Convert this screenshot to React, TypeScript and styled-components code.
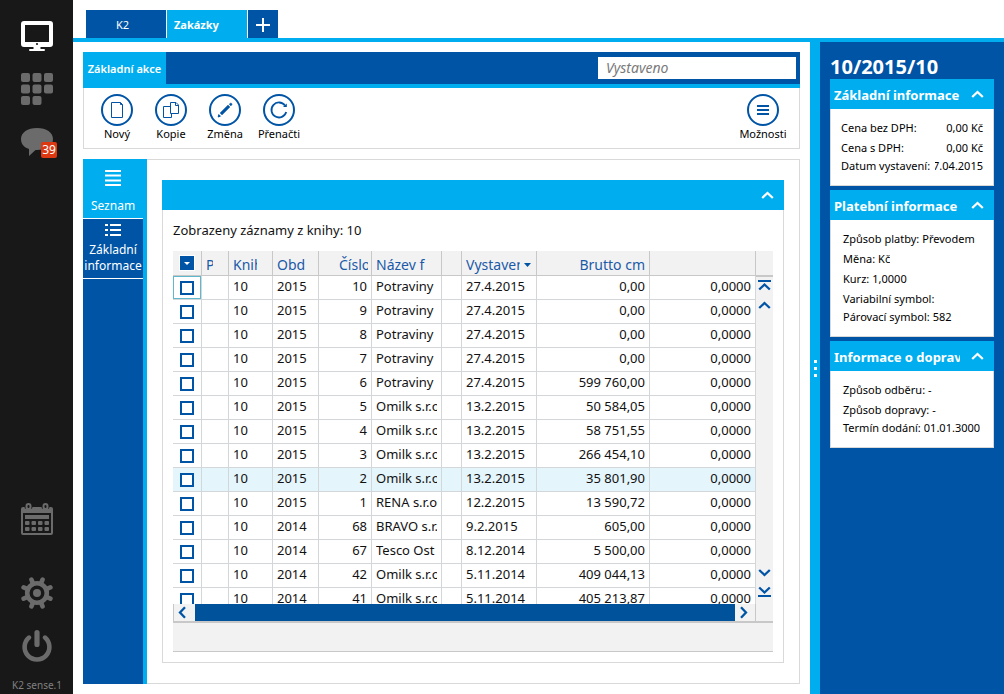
import React from 'react';
import styled, { createGlobalStyle, css } from 'styled-components';

const BLUE = '#0054a6';
const CYAN = '#00aeef';
const LINE = '#d9d9d9';
const GRAY = '#f2f2f2';
const RULE = '#c8c8c8';

const GlobalStyle = createGlobalStyle`
  *, *::before, *::after { box-sizing: border-box; }
  body {
    margin: 0;
    background: #fff;
    color: #111;
    font-family: "Noto Sans", "Open Sans", sans-serif;
    font-size: 13px;
  }
  button {
    margin: 0;
    padding: 0;
    border: 0;
    background: none;
    color: inherit;
    font: inherit;
    cursor: pointer;
  }
  svg { display: block; flex: none; }
  h1, h2, p, dl, dd, dt { margin: 0; }
`;

const Shell = styled.div`
  display: flex;
  height: 100vh;
  min-height: 560px;
  overflow: hidden;
`;

const Sidebar = styled.nav`
  display: flex;
  flex-direction: column;
  align-items: center;
  justify-content: space-between;
  width: 73px;
  flex: none;
  padding: 20px 0 0 1px;
  background: #181818;
  color: #6b6b6b;
`;

const SideGroup = styled.div<{ $gap: number }>`
  display: flex;
  flex-direction: column;
  align-items: center;
  gap: ${(p) => p.$gap}px;
`;

const SideButton = styled.button<{ $active?: boolean }>`
  position: relative;
  width: 32px;
  height: 32px;
  color: ${(p) => (p.$active ? '#fff' : 'inherit')};
`;

const Badge = styled.span`
  position: absolute;
  left: 20px;
  top: 16px;
  width: 16px;
  height: 16px;
  border-radius: 2px;
  background: #dc3912;
  color: #fff;
  font-size: 12px;
  line-height: 16px;
  text-align: center;
`;

const Version = styled.p`
  margin-top: 14px;
  font-size: 10px;
  line-height: 18px;
  color: #808080;
  white-space: nowrap;
`;

const Main = styled.div`
  display: flex;
  flex-direction: column;
  flex: 1;
  min-width: 0;
`;

const TabBar = styled.div`
  display: flex;
  gap: 1px;
  padding: 10px 13px 0;
  border-bottom: 4px solid ${CYAN};
`;

const Tab = styled.button<{ $active?: boolean }>`
  width: 80px;
  height: 28px;
  padding: 0 14px 0 7px;
  background: ${(p) => (p.$active ? CYAN : BLUE)};
  color: #fff;
  font-size: 11px;
  font-weight: ${(p) => (p.$active ? 700 : 400)};
  text-align: ${(p) => (p.$active ? 'left' : 'center')};
`;

const AddTab = styled.button`
  display: grid;
  place-items: center;
  width: 30px;
  height: 28px;
  padding-top: 2px;
  background: ${BLUE};
`;

const Body = styled.div`
  display: flex;
  flex: 1;
  min-height: 0;
`;

const Content = styled.main`
  display: flex;
  flex-direction: column;
  gap: 10px;
  flex: 1;
  min-width: 0;
  padding: 10px;
`;

const RibbonHead = styled.div`
  display: flex;
  height: 36px;
  background: ${BLUE};
  border-bottom: 4px solid ${CYAN};
`;

const RibbonTab = styled.button`
  width: 83px;
  background: ${CYAN};
  color: #fff;
  font-size: 11px;
  font-weight: 600;
`;

const Search = styled.input`
  width: 198px;
  height: 22px;
  margin: 5px 4px 0 auto;
  padding: 0 8px 2px;
  border: 0;
  background: #fff;
  font: italic 14px "Noto Sans", sans-serif;
  color: #333;
  &::placeholder { color: #7a7a7a; opacity: 1; }
`;

const Tools = styled.div`
  display: flex;
  height: 61px;
  padding: 6px 9px 0 6px;
  border: 1px solid ${LINE};
  border-top: 0;
`;

const ToolButton = styled.button<{ $end?: boolean }>`
  display: flex;
  flex-direction: column;
  align-items: center;
  width: 54px;
  margin-left: ${(p) => (p.$end ? 'auto' : '0')};
  font-size: 11px;
  line-height: 16px;
  color: #000;
  white-space: nowrap;
`;

const Work = styled.div`
  display: flex;
  flex: 1;
  min-height: 0;
`;

const ViewNav = styled.nav`
  width: 64px;
  flex: none;
  background: ${BLUE};
  border-right: 4px solid ${CYAN};
`;

const ViewButton = styled.button<{ $active?: boolean }>`
  display: flex;
  flex-direction: column;
  align-items: center;
  justify-content: space-between;
  width: 100%;
  height: 60px;
  padding: ${(p) => (p.$active ? '11px 0 4px' : '5px 0 4px')};
  border-bottom: 1px solid #fff;
  background: ${(p) => (p.$active ? CYAN : BLUE)};
  color: #fff;
  font-size: 12px;
  line-height: 16px;
`;

const Workspace = styled.section`
  display: flex;
  flex: 1;
  min-width: 0;
  padding: 20px 15px;
  border: 1px solid ${LINE};
  border-left: 0;
`;

const Panel = styled.div`
  display: flex;
  flex-direction: column;
  flex: 1;
  min-width: 0;
`;

const PanelHead = styled.div`
  display: flex;
  align-items: center;
  justify-content: flex-end;
  height: 30px;
  padding-right: 10px;
  background: ${CYAN};
  flex: none;
`;

const PanelBody = styled.div`
  display: flex;
  flex-direction: column;
  flex: 1;
  min-height: 0;
  padding: 10px;
  border: 1px solid ${LINE};
  border-top: 0;
`;

const Summary = styled.p`
  height: 31px;
  flex: none;
  line-height: 20px;
`;

const Grid = styled.div`
  display: flex;
  flex: 1;
  min-height: 0;
  border-bottom: 2px solid ${RULE};
`;

const GridMain = styled.div`
  display: flex;
  flex-direction: column;
  flex: 1;
  min-width: 0;
`;

const Viewport = styled.div`
  flex: 1;
  min-height: 0;
  overflow: hidden;
`;

const GridFooter = styled.div`
  height: 29px;
  flex: none;
  background: ${GRAY};
  border-bottom: 1px solid ${RULE};
`;

const Table = styled.table`
  width: 100%;
  table-layout: fixed;
  border-collapse: separate;
  border-spacing: 0;
`;

const Col = styled.col<{ $w?: number }>`
  width: ${(p) => (p.$w ? `${p.$w}px` : 'auto')};
`;

const Th = styled.th<{ $right?: boolean; $before?: number; $after?: number }>`
  height: 25px;
  padding: 3px ${(p) => p.$after ?? 15}px 0 ${(p) => p.$before ?? 4}px;
  border-right: 1px solid ${RULE};
  border-bottom: 1px solid ${RULE};
  background: ${GRAY};
  color: #1a5aa8;
  font-size: 14px;
  font-weight: 400;
  line-height: 20px;
  text-align: ${(p) => (p.$right ? 'right' : 'left')};
`;

const Td = styled.td<{ $right?: boolean }>`
  height: 24px;
  padding: 0 4px 3px;
  border-right: 1px solid #d4d7da;
  border-bottom: 1px solid #d4d7da;
  line-height: 20px;
  text-align: ${(p) => (p.$right ? 'right' : 'left')};
`;

const Clip = styled.div`
  overflow: hidden;
  white-space: nowrap;
`;

const SortClip = styled.div`
  display: flex;
  align-items: center;
  gap: 4px;
  margin-right: -10px;
`;

const Row = styled.tr<{ $selected?: boolean }>`
  background: ${(p) => (p.$selected ? '#e5f5fc' : '#fff')};
`;

const CheckCell = styled.td<{ $focused?: boolean }>`
  height: 24px;
  padding: 0;
  border-right: 1px solid #d4d7da;
  border-bottom: 1px solid #d4d7da;
  ${(p) => p.$focused && css`box-shadow: inset 0 0 0 1px #5fb8cc;`}
`;

const Check = styled.input`
  appearance: none;
  display: block;
  width: 14px;
  height: 14px;
  margin: 1px auto 0;
  border: 2px solid ${BLUE};
  background: #fff;
  &:checked { background: ${BLUE}; box-shadow: inset 0 0 0 2px #fff; }
`;

const MenuCheck = styled.button`
  display: grid;
  place-items: center;
  width: 14px;
  height: 14px;
  margin: -3px auto 0;
  background: ${BLUE};
  box-shadow: 0 0 0 1px #fff;
`;

const HScroll = styled.div`
  display: flex;
  height: 17px;
  flex: none;
  background: ${GRAY};
  border-left: 1px solid ${RULE};
  border-right: 1px solid ${RULE};
`;

const HThumb = styled.div`
  flex: 1;
  background: #00529b;
`;

const HButton = styled.button<{ $w: number }>`
  display: grid;
  place-items: center;
  width: ${(p) => p.$w}px;
  padding-right: 4px;
`;

const VScroll = styled.div`
  display: flex;
  flex-direction: column;
  align-items: center;
  width: 17px;
  flex: none;
  padding-bottom: 20px;
  background: ${GRAY};
`;

const VHead = styled.div`
  width: 100%;
  height: 26px;
  flex: none;
  border-bottom: 2px solid ${RULE};
`;

const VButton = styled.button<{ $push?: boolean }>`
  display: grid;
  place-items: center;
  width: 17px;
  height: 19px;
  margin-top: ${(p) => (p.$push ? 'auto' : '0')};
`;

const Splitter = styled.div`
  display: flex;
  flex-direction: column;
  align-items: center;
  justify-content: center;
  gap: 4px;
  width: 10px;
  flex: none;
  background: ${CYAN};
`;

const Dot = styled.span`
  width: 3px;
  height: 3px;
  background: #fff;
`;

const Aside = styled.aside`
  width: 184px;
  flex: none;
  padding: 10px;
  background: ${BLUE};
`;

const DocTitle = styled.h1`
  height: 27px;
  color: #fff;
  font-size: 20px;
  font-weight: 700;
  line-height: 30px;
`;

const Card = styled.section`
  margin-bottom: 4px;
`;

const CardHead = styled.header`
  display: flex;
  align-items: center;
  justify-content: space-between;
  height: 30px;
  padding: 0 10px 0 4px;
  background: ${CYAN};
  color: #fff;
`;

const CardTitle = styled.h2`
  width: 126px;
  padding-top: 2px;
  overflow: hidden;
  font-size: 13px;
  font-weight: 700;
  line-height: 20px;
  white-space: nowrap;
`;

const Facts = styled.dl<{ $spread?: boolean }>`
  padding: ${(p) => (p.$spread ? '9px 10px 11px' : '9px 8px 11px 12px')};
  border: 1px solid ${LINE};
  border-top: 0;
  background: #fff;
  color: #000;
  font-size: 11px;
`;

const Fact = styled.div<{ $spread?: boolean }>`
  display: flex;
  gap: ${(p) => (p.$spread ? 5 : 3)}px;
  justify-content: ${(p) => (p.$spread ? 'space-between' : 'flex-start')};
  line-height: 20px;
  white-space: nowrap;
  dt { flex: none; }
  dd {
    display: flex;
    justify-content: flex-end;
    min-width: 0;
    overflow: hidden;
  }
  &:last-child { line-height: 16px; }
`;

type ChevronDir = 'up' | 'down' | 'left' | 'right';
const chevronPath: Record<ChevronDir, string> = {
  up: 'M1.2 9 L6.5 4 L11.8 9',
  down: 'M1.2 4 L6.5 9 L11.8 4',
  left: 'M9 1.2 L4 6.5 L9 11.8',
  right: 'M4 1.2 L9 6.5 L4 11.8',
};

function Chevron({ dir, color = BLUE }: { dir: ChevronDir; color?: string }) {
  return (
    <svg width="13" height="13" viewBox="0 0 13 13" fill="none" stroke={color} strokeWidth="2.300">
      <path d={chevronPath[dir]} />
    </svg>
  );
}

function EdgeChevron({ dir }: { dir: 'up' | 'down' }) {
  return (
    <svg width="13" height="13" viewBox="0 0 13 13" fill="none" stroke={BLUE} strokeWidth="2.300">
      <path d={dir === 'up' ? 'M1.2 9.500 L6.5 4.500 L11.8 9.500' : 'M1.2 2.500 L6.5 7.500 L11.8 2.500'} />
      <path d={dir === 'up' ? 'M0 1 H13' : 'M0 11 H13'} strokeWidth="2" />
    </svg>
  );
}

function MonitorIcon() {
  return (
    <svg width="32" height="32" viewBox="0 0 32 32" fill="currentColor">
      <path fillRule="evenodd" d="M3 1 H29 A3 3 0 0 1 32 4 V24 A3 3 0 0 1 29 27 H3 A3 3 0 0 1 0 24 V4 A3 3 0 0 1 3 1 Z M4 5 V22 H28 V5 Z" />
      <path d="M12.500 27 H19.500 V29 H23 A1 1 0 0 1 23 31 H9 A1 1 0 0 1 9 29 H12.500 Z" />
      <circle cx="16" cy="24" r="1.1" fill="#181818" />
    </svg>
  );
}

function AppsIcon() {
  const cells = [[0, 0], [1, 0], [2, 0], [0, 1], [1, 1], [2, 1], [0, 2], [1, 2]];
  return (
    <svg width="32" height="32" viewBox="0 0 32 32" fill="currentColor">
      {cells.map(([x, y]) => (
        <rect key={`${x}-${y}`} x={x * 11.5} y={y * 11.5} width="9" height="9" rx="2" />
      ))}
    </svg>
  );
}

function ChatIcon() {
  return (
    <svg width="32" height="32" viewBox="0 0 32 32" fill="currentColor">
      <path d="M16 2 C25.500 2 32 6.500 32 13 C32 20 25.500 24 16 24 L14.500 24 L8 30 V23 C3 21.500 0 18 0 13 C0 6.500 6.500 2 16 2 Z" />
    </svg>
  );
}

function CalendarIcon() {
  return (
    <svg width="32" height="32" viewBox="0 0 32 32">
      <path fill="currentColor" fillRule="evenodd" d="M2 4 H30 A2 2 0 0 1 32 6 V30 A2 2 0 0 1 30 32 H2 A2 2 0 0 1 0 30 V6 A2 2 0 0 1 2 4 Z M2 10 V30 H30 V10 Z" />
      <rect x="4" y="12" width="24" height="4" fill="currentColor" />
      {[18, 24].map((y) => [4, 10.5, 17, 23.5].map((x) => (
        <rect key={`${x}-${y}`} x={x} y={y} width="4.500" height="4" rx="1" fill="currentColor" />
      )))}
      {[7.5, 24.5].map((x) => (
        <g key={x}>
          <rect x={x - 4} y="-2" width="8" height="8" rx="2" fill="#181818" />
          <rect x={x - 2} y="1" width="4" height="5" rx="2" fill="#181818" stroke="currentColor" strokeWidth="2" />
        </g>
      ))}
    </svg>
  );
}

function GearIcon() {
  return (
    <svg width="32" height="32" viewBox="0 0 32 32" fill="none" stroke="currentColor">
      <circle cx="16" cy="16" r="9.800" strokeWidth="4.600" />
      <circle cx="16" cy="16" r="4" fill="currentColor" stroke="none" />
      {[22.5, 67.5, 112.5, 157.5, 202.5, 247.5, 292.5, 337.5].map((a) => (
        <path key={a} d="M16 6 V1.500" strokeWidth="4.600" strokeLinecap="round" transform={`rotate(${a} 16 16)`} />
      ))}
    </svg>
  );
}

function PowerIcon() {
  return (
    <svg width="32" height="32" viewBox="0 0 32 32" fill="none" stroke="currentColor" strokeWidth="4.600" strokeLinecap="round">
      <path d="M8 7.600 A12.400 12.400 0 1 0 24 7.600" />
      <path d="M16 2.600 V14.400" strokeWidth="5.200" />
    </svg>
  );
}

function RoundIcon({ children }: { children: React.ReactNode }) {
  return (
    <svg width="32" height="32" viewBox="0 0 32 32" fill="none" stroke={BLUE}>
      <circle cx="16" cy="16" r="15" strokeWidth="2" />
      {children}
    </svg>
  );
}

const tools = [
  { label: 'Nový', icon: <path d="M10.500 8.500 H19.500 L21.500 10.500 V23.500 H10.500 Z M19.500 8.500 V10.500 H21.500" /> },
  {
    label: 'Kopie',
    icon: <path d="M15.500 12.500 H8.500 V23.500 H16.500 V19.500 M15.500 8.500 H21 L23.500 11 V19.500 H15.500 Z M20.500 8.500 V11.500 H23.500" />,
  },
  {
    label: 'Změna',
    icon: (
      <g stroke="none" fill={BLUE}>
        <path d="M9.200 23 L9.800 20.600 L11.400 22.200 Z" stroke={BLUE} />
        <path d="M11 19 L19 11 L21 13 L13 21 Z" stroke={BLUE} strokeWidth="0.400" />
        <path d="M20.200 10.200 L21 9.400 A1.200 1.200 0 0 1 22.700 11.100 L21.900 11.900 Z" stroke={BLUE} strokeWidth="0.400" />
      </g>
    ),
  },
  {
    label: 'Přenačti',
    icon: (
      <g>
        <path d="M23.200 18 A7.500 7.500 0 1 1 22 11.500" strokeWidth="1.800" />
        <path d="M23.800 9.500 V13 H20 Z" fill={BLUE} stroke="none" />
      </g>
    ),
  },
];

const rows: [string, string, string, string, string, string][] = [
  ['10', '2015', '10', 'Potraviny', '27.4.2015', '0,00'],
  ['10', '2015', '9', 'Potraviny', '27.4.2015', '0,00'],
  ['10', '2015', '8', 'Potraviny', '27.4.2015', '0,00'],
  ['10', '2015', '7', 'Potraviny', '27.4.2015', '0,00'],
  ['10', '2015', '6', 'Potraviny', '27.4.2015', '599 760,00'],
  ['10', '2015', '5', 'Omilk s.r.o.', '13.2.2015', '50 584,05'],
  ['10', '2015', '4', 'Omilk s.r.o.', '13.2.2015', '58 751,55'],
  ['10', '2015', '3', 'Omilk s.r.o.', '13.2.2015', '266 454,10'],
  ['10', '2015', '2', 'Omilk s.r.o.', '13.2.2015', '35 801,90'],
  ['10', '2015', '1', 'RENA s.r.o.', '12.2.2015', '13 590,72'],
  ['10', '2014', '68', 'BRAVO s.r.o.', '9.2.2015', '605,00'],
  ['10', '2014', '67', 'Tesco Ost', '8.12.2014', '5 500,00'],
  ['10', '2014', '42', 'Omilk s.r.o.', '5.11.2014', '409 044,13'],
  ['10', '2014', '41', 'Omilk s.r.o.', '5.11.2014', '405 213,87'],
];

const cards = [
  {
    title: 'Základní informace',
    spread: true,
    facts: [['Cena bez DPH:', '0,00 Kč'], ['Cena s DPH:', '0,00 Kč'], ['Datum vystavení:', '27.04.2015']],
  },
  {
    title: 'Platební informace',
    facts: [['Způsob platby:', 'Převodem'], ['Měna:', 'Kč'], ['Kurz:', '1,0000'], ['Variabilní symbol:', ''], ['Párovací symbol:', '582']],
  },
  {
    title: 'Informace o dopravě',
    facts: [['Způsob odběru:', '-'], ['Způsob dopravy:', '-'], ['Termín dodání:', '01.01.3000']],
  },
];

function RecordTable() {
  return (
    <Table>
      <colgroup>
        {[29, 27, 44, 46, 53, 70, 20, 75, 113].map((w, i) => <Col key={i} $w={w} />)}
        <Col />
      </colgroup>
      <thead>
        <tr>
          <Th $before={0} $after={0}>
            <MenuCheck aria-label="Výběr záznamů">
              <svg width="6" height="3" viewBox="0 0 6 3"><path d="M0 0 H6 L3 3 Z" fill="#fff" /></svg>
            </MenuCheck>
          </Th>
          <Th><Clip>P</Clip></Th>
          <Th><Clip>Knih</Clip></Th>
          <Th $after={8}><Clip>Obd</Clip></Th>
          <Th $before={20} $after={3}><Clip>Číslo</Clip></Th>
          <Th $after={8}><Clip>Název f</Clip></Th>
          <Th />
          <Th>
            <SortClip>
              <Clip>Vystaveno</Clip>
              <svg width="7" height="4" viewBox="0 0 7 4"><path d="M0 0 H7 L3.500 4 Z" fill={BLUE} /></svg>
            </SortClip>
          </Th>
          <Th $right $after={4}><Clip>Brutto cm</Clip></Th>
          <Th />
        </tr>
      </thead>
      <tbody>
        {rows.map(([book, period, number, name, date, gross], i) => (
          <Row key={number} $selected={i === 8}>
            <CheckCell $focused={i === 0}><Check type="checkbox" aria-label={`Vybrat záznam ${number}`} /></CheckCell>
            <Td />
            <Td>{book}</Td>
            <Td>{period}</Td>
            <Td $right>{number}</Td>
            <Td><Clip>{name}</Clip></Td>
            <Td />
            <Td>{date}</Td>
            <Td $right>{gross}</Td>
            <Td $right>0,0000</Td>
          </Row>
        ))}
      </tbody>
    </Table>
  );
}

export default function App() {
  return (
    <>
      <GlobalStyle />
      <Shell>
        <Sidebar>
          <SideGroup $gap={21}>
            <SideButton $active aria-label="Plocha"><MonitorIcon /></SideButton>
            <SideButton aria-label="Aplikace"><AppsIcon /></SideButton>
            <SideButton aria-label="Zprávy"><ChatIcon /><Badge>39</Badge></SideButton>
          </SideGroup>
          <SideGroup $gap={42}>
            <SideButton aria-label="Kalendář"><CalendarIcon /></SideButton>
            <SideGroup $gap={0}>
              <SideGroup $gap={21}>
                <SideButton aria-label="Nastavení"><GearIcon /></SideButton>
                <SideButton aria-label="Odhlásit"><PowerIcon /></SideButton>
              </SideGroup>
              <Version>K2 sense.1</Version>
            </SideGroup>
          </SideGroup>
        </Sidebar>
        <Main>
          <TabBar>
            <Tab>K2</Tab>
            <Tab $active>Zakázky</Tab>
            <AddTab aria-label="Nová záložka">
              <svg width="14" height="14" viewBox="0 0 14 14" stroke="#fff" strokeWidth="2"><path d="M7 0 V14 M0 7 H14" /></svg>
            </AddTab>
          </TabBar>
          <Body>
            <Content>
              <div>
                <RibbonHead>
                  <RibbonTab>Základní akce</RibbonTab>
                  <Search placeholder="Vystaveno" aria-label="Vystaveno" />
                </RibbonHead>
                <Tools>
                  {tools.map((t) => (
                    <ToolButton key={t.label}><RoundIcon>{t.icon}</RoundIcon>{t.label}</ToolButton>
                  ))}
                  <ToolButton $end>
                    <RoundIcon><path d="M10 12 H22 M10 16 H22 M10 20 H22" strokeWidth="2" /></RoundIcon>
                    Možnosti
                  </ToolButton>
                </Tools>
              </div>
              <Work>
                <ViewNav>
                  <ViewButton $active>
                    <svg width="16" height="16" viewBox="0 0 16 16" stroke="#fff" strokeWidth="2"><path d="M0 1 H16 M0 5.500 H16 M0 10.500 H16 M0 15 H16" /></svg>
                    Seznam
                  </ViewButton>
                  <ViewButton>
                    <svg width="16" height="12" viewBox="0 0 16 12" stroke="#fff" strokeWidth="2"><path d="M0 1 H3 M5 1 H16 M0 6 H3 M5 6 H16 M0 11 H3 M5 11 H16" /></svg>
                    <span>Základní informace</span>
                  </ViewButton>
                </ViewNav>
                <Workspace>
                  <Panel>
                    <PanelHead>
                      <button aria-label="Sbalit"><Chevron dir="up" color="#fff" /></button>
                    </PanelHead>
                    <PanelBody>
                      <Summary>Zobrazeny záznamy z knihy: 10</Summary>
                      <Grid>
                        <GridMain>
                          <Viewport><RecordTable /></Viewport>
                          <HScroll>
                            <HButton $w={21} aria-label="Doleva"><Chevron dir="left" /></HButton>
                            <HThumb />
                            <HButton $w={20} aria-label="Doprava"><Chevron dir="right" /></HButton>
                          </HScroll>
                        </GridMain>
                        <VScroll>
                          <VHead />
                          <VButton aria-label="Na začátek"><EdgeChevron dir="up" /></VButton>
                          <VButton aria-label="Nahoru"><Chevron dir="up" /></VButton>
                          <VButton $push aria-label="Dolů"><Chevron dir="down" /></VButton>
                          <VButton aria-label="Na konec"><EdgeChevron dir="down" /></VButton>
                        </VScroll>
                      </Grid>
                      <GridFooter />
                    </PanelBody>
                  </Panel>
                </Workspace>
              </Work>
            </Content>
            <Splitter><Dot /><Dot /><Dot /></Splitter>
            <Aside>
              <DocTitle>10/2015/10</DocTitle>
              {cards.map((card) => (
                <Card key={card.title}>
                  <CardHead>
                    <CardTitle>{card.title}</CardTitle>
                    <button aria-label="Sbalit"><Chevron dir="up" color="#fff" /></button>
                  </CardHead>
                  <Facts $spread={card.spread}>
                    {card.facts.map(([k, v]) => (
                      <Fact key={k} $spread={card.spread}><dt>{k}</dt><dd>{v}</dd></Fact>
                    ))}
                  </Facts>
                </Card>
              ))}
            </Aside>
          </Body>
        </Main>
      </Shell>
    </>
  );
}
